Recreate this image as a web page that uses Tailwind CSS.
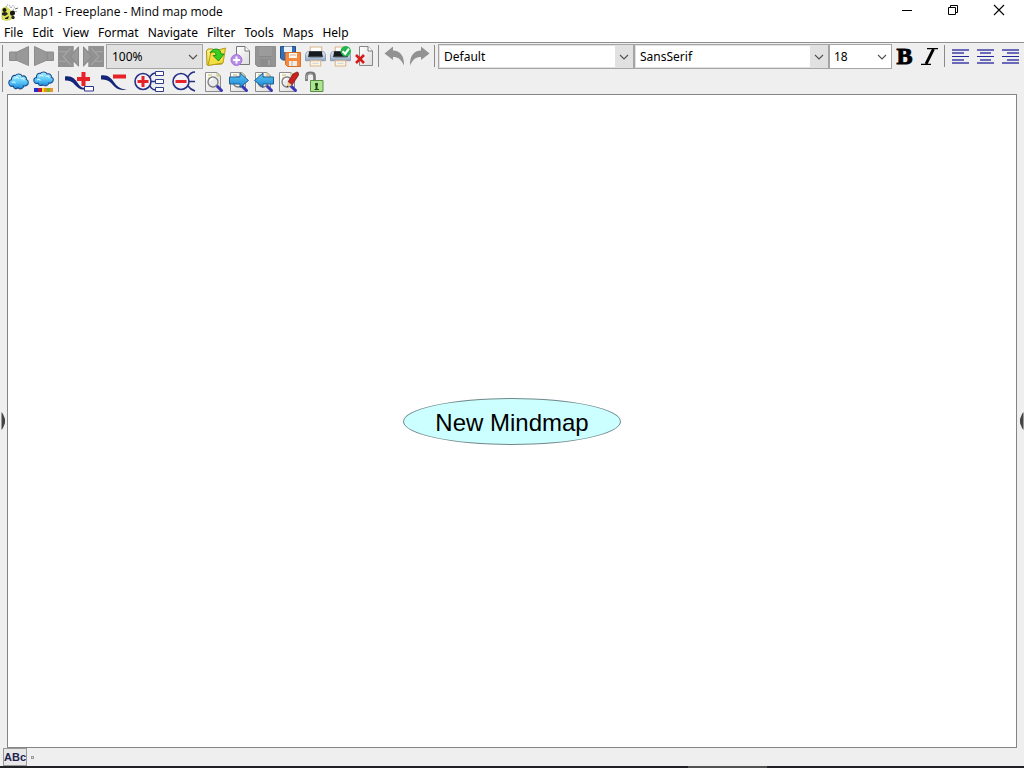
<!DOCTYPE html>
<html lang="en">
<head>
<meta charset="utf-8">
<title>Map1 - Freeplane - Mind map mode</title>
<script src="https://cdn.jsdelivr.net/npm/@tailwindcss/browser@4"></script>
</head>
<body class="flex h-screen flex-col overflow-hidden bg-[#efefef] text-xs text-black font-['Noto_Sans',sans-serif]">

<!-- Shared gradients and symbols -->
<svg class="absolute size-0" aria-hidden="true">
  <defs>
    <linearGradient id="sky" x1="0" y1="0" x2="0" y2="1"><stop offset="0" stop-color="#a8ecff"/><stop offset=".5" stop-color="#62cdf8"/><stop offset="1" stop-color="#1689dc"/></linearGradient>
    <linearGradient id="paper" x1="0" y1="0" x2="1" y2="1"><stop offset="0" stop-color="#ffffff"/><stop offset="1" stop-color="#dcdcdc"/></linearGradient>
    <linearGradient id="folder" x1="0" y1="0" x2="1" y2="1"><stop offset="0" stop-color="#fff48a"/><stop offset="1" stop-color="#e3c21c"/></linearGradient>
    <linearGradient id="blue" x1="0" y1="0" x2="0" y2="1"><stop offset="0" stop-color="#5ccaf8"/><stop offset="1" stop-color="#1a84d0"/></linearGradient>
    <linearGradient id="silver" x1="0" y1="0" x2="0" y2="1"><stop offset="0" stop-color="#eef4fb"/><stop offset="1" stop-color="#8da5c2"/></linearGradient>
    <symbol id="cloud" viewBox="0 0 20 15">
      <path d="M5 11.500C2.500 12.500 .5 10.500 .8 8.300C1 6.500 2.500 6 3.300 6C3 3.500 5 1.600 7 2.200C8.500 .3 12.500 .3 13.500 2.800C16 2 18 3.800 17.500 5.800C20 6.500 20 10 17.500 11C16.500 11.500 15.500 11.500 15 11.300C14.500 14 11 14.800 9.500 13C7.500 14.500 5.300 13.700 5 11.500Z" fill="url(#sky)" stroke="#17468c" stroke-width="1"/>
      <path d="M6 5C7.500 3 9.500 4 10 5M12 5C14 4 15 5 15.500 6.500M4 8.500C5 7.500 6.500 8 7 9" fill="none" stroke="#d8f7ff" stroke-width="1"/>
    </symbol>
    <symbol id="lens" viewBox="0 0 20 22">
      <path d="M1.500 1.500H13L16.500 5V20.500H1.500Z" fill="url(#paper)" stroke="#8c8c8c"/>
      <path d="M4 4H8M4 7H6M13 1.500V5H16.500" stroke="#c9bd69" fill="none"/>
      <path d="M13 15L17.500 19.500" stroke="#3836b5" stroke-width="3" stroke-linecap="round"/>
      <circle cx="9" cy="11" r="5" fill="#e7e9ec" fill-opacity=".85" stroke="#7c7c7c" stroke-width="1.300"/>
      <path d="M6 10A3.500 3.500 0 0 1 9.500 7.500" fill="none" stroke="#fff" stroke-width="1.500"/>
    </symbol>
    <symbol id="printer" viewBox="0 0 20 20">
      <path d="M5 6V1H16V6" fill="#fff" stroke="#d9b58a"/>
      <path d="M2 5.500H18L19.500 8V14H.5V8Z" fill="url(#silver)" stroke="#8394ab" stroke-width=".8"/>
      <path d="M4 5H16L17 10.500H3Z" fill="#171b1e"/>
      <path d="M4 10.500H16" stroke="#687179"/>
      <path d="M5 14H15V19H5Z" fill="#fff6e4" stroke="#d9b58a"/>
      <path d="M7 16.500H13" stroke="#c9d4df"/>
    </symbol>
    <symbol id="fastback" viewBox="0 0 20 20">
      <path d="M0 0H15V5L20 0V20L15 15V20H0Z" fill="#929292"/>
      <path d="M1 5.500H8M1 14.500H8M12 2L5 10L12 18" fill="none" stroke="#a9a9a9"/>
      <path d="M12 10L19.500 1V19Z" fill="#999" stroke="#858585" stroke-width=".7"/>
    </symbol>
    <symbol id="arrowback" viewBox="0 0 20 20">
      <path d="M19.500 .5L8 6H.5V14.500H8L19.500 19.500Z" fill="#999" stroke="#8c8c8c"/>
      <path d="M7 6V14" stroke="#888"/>
    </symbol>
    <symbol id="chevron" viewBox="0 0 10 6"><path d="M1 1L5 5L9 1" fill="none" stroke="#505050" stroke-width="1.100"/></symbol>
  </defs>
</svg>

<header class="shrink-0 border-b border-[#909090] bg-white">
  <div class="flex h-6 items-center">
    <svg class="ml-px size-[18px]" viewBox="0 0 18 18" aria-hidden="true">
      <path d="M1 6C4 3 9 5 10 9V16C7 18 3 17 1 16Z" fill="#dfe35c" stroke="#c9cf4c"/>
      <path d="M1 10C4 8 6 9 7 11L4 13L1 12ZM4 15L8 13L7 16H4Z" fill="#202620"/>
      <circle cx="3.500" cy="7" r="2" fill="#151915"/>
      <path d="M9 9C11 7 14 7 14 10C14 13 10 14 9 11Z" fill="#161a16"/>
      <circle cx="12" cy="14.500" r="1.700" fill="#222b19"/>
      <path d="M5 4C6 0 10 2 9 5M10 5C12 0 15 3 12 7" fill="none" stroke="#888" stroke-dasharray="1 1"/>
      <path d="M14 6L17 5M15 8V9" stroke="#666"/>
    </svg>
    <h1 class="ml-1 grow whitespace-nowrap font-['Open_Sans',sans-serif] text-xs">Map1 - Freeplane - Mind map mode</h1>
    <div class="flex h-6 items-start">
      <button aria-label="Minimize" class="grid h-5 w-[46px] place-items-center"><svg class="size-3" viewBox="0 0 12 12"><path d="M1 6.500H11" stroke="#000"/></svg></button>
      <button aria-label="Restore" class="grid h-5 w-[46px] place-items-center"><svg class="size-3" viewBox="0 0 12 12" fill="none" stroke="#000"><path d="M1.500 3.500H8.500V10.500H1.500ZM3.500 3.500V1.500H10.500V8.500H8.500"/></svg></button>
      <button aria-label="Close" class="grid h-5 w-[46px] place-items-center"><svg class="size-3" viewBox="0 0 12 12"><path d="M1 1L11 11M11 1L1 11" stroke="#000" stroke-width="1.100"/></svg></button>
    </div>
    <span class="w-0.5"></span>
  </div>
  <nav class="flex h-[18px] items-center gap-[9px] pl-1" aria-label="Menu">
    <button>File</button><button>Edit</button><button>View</button><button>Format</button><button>Navigate</button><button>Filter</button><button>Tools</button><button>Maps</button><button>Help</button>
  </nav>
</header>

<div class="shrink-0" role="toolbar" aria-label="Main toolbar">
  <div class="flex h-[26px] items-center">
    <span class="ml-0.5 mr-[3px] h-[22px] w-px bg-[#8a8a8a]"></span>
    <button aria-label="Back" class="grid h-6 w-[25px] shrink-0 place-items-center"><svg class="size-5"><use href="#arrowback"/></svg></button>
    <button aria-label="Forward" class="grid h-6 w-[25px] shrink-0 place-items-center"><svg class="size-5 -scale-x-100"><use href="#arrowback"/></svg></button>
    <button aria-label="Previous node" class="grid h-6 w-[25px] shrink-0 place-items-center"><svg class="size-[21px]"><use href="#fastback"/></svg></button>
    <button aria-label="Next node" class="grid h-6 w-[25px] shrink-0 place-items-center"><svg class="size-[21px] -scale-x-100"><use href="#fastback"/></svg></button>
    <div class="relative h-[25px] w-[97px] shrink-0">
      <select aria-label="Zoom" class="size-full appearance-none border border-[#a5a5a5] bg-[#e1e1e1] pl-[5px] pt-px"><option>100%</option></select>
      <svg class="pointer-events-none absolute right-[5px] top-[10px] h-1.5 w-2.5"><use href="#chevron"/></svg>
    </div>
    <button aria-label="Open" class="grid h-6 w-[25px] shrink-0 place-items-center"><svg class="size-5" viewBox="0 0 20 20"><path d="M1 19L.5 5L2 3H7L8 4H16V18Z" fill="url(#folder)" stroke="#a99316"/><path d="M5 6L19.500 2L17 17L2 19.500Z" fill="#f3df43" stroke="#b79b16"/><path d="M4 7C7 1 15 2 15 8H18L12.500 15L7 9.500H10C10 6 7 5 4 7Z" fill="#35ce24" stroke="#16820e" stroke-width=".8"/></svg></button>
    <button aria-label="New map" class="grid h-6 w-[25px] shrink-0 place-items-center"><svg class="size-[22px]" viewBox="0 0 22 22"><path d="M6.500 1.500H15L19.500 6V19.500H6.500Z" fill="url(#paper)" stroke="#777"/><path d="M15 1.500V6H19.500" fill="#fff" stroke="#777"/><circle cx="6.500" cy="15" r="5.500" fill="#b98be9" stroke="#a578d8"/><path d="M6.500 11.500V18.500M3 15H10" stroke="#fff" stroke-width="2"/></svg></button>
    <button aria-label="Save" class="grid h-6 w-[25px] shrink-0 place-items-center"><svg class="size-[21px]" viewBox="0 0 21 21"><path d="M.5 .5H20.500V20.500H2.500L.5 18.500Z" fill="#949494" stroke="#8e8e8e"/><path d="M4 1H17V10H4Z" fill="#9b9b9b"/><path d="M5 13H16V20H5Z" fill="#8c8c8c"/><path d="M13 14H15V19H13Z" fill="#a2a2a2"/><path d="M4 10.500H17" stroke="#898989"/></svg></button>
    <button aria-label="Save as" class="grid h-6 w-[25px] shrink-0 place-items-center"><svg class="size-[21px]" viewBox="0 0 21 21"><path d="M.5 .5H15.500V14H2.500L.5 12Z" fill="#3271b6" stroke="#224d87"/><path d="M4 .5H12V6H4Z" fill="#edf4f9"/><path d="M5.500 6.500H20.500V20.500H7.500L5.500 18.500Z" fill="#f58a3e" stroke="#d96e26"/><path d="M9 7H17V12H9Z" fill="#fff8ee"/><path d="M9 15H17V20H9Z" fill="#eee"/><path d="M10 9H16M12 15V20" stroke="#d9a988"/></svg></button>
    <button aria-label="Print" class="grid h-6 w-[25px] shrink-0 place-items-center"><svg class="size-[21px]"><use href="#printer"/></svg></button>
    <button aria-label="Quick print" class="grid h-6 w-[25px] shrink-0 place-items-center"><svg class="size-[21px]" viewBox="0 0 20 20"><use href="#printer" width="20" height="20"/><circle cx="15" cy="5" r="5" fill="#23b54b"/><path d="M12 5L14.500 7.500L18 2.500" fill="none" stroke="#fff" stroke-width="2"/></svg></button>
    <button aria-label="Close map" class="grid h-6 w-[25px] shrink-0 place-items-center"><svg class="size-[21px]" viewBox="0 0 21 21"><path d="M4.500 .5H13L17.500 5V19.500H4.500Z" fill="url(#paper)" stroke="#888"/><path d="M13 .5V5H17.500" fill="#fff" stroke="#777"/><path d="M1 9L9 17M9 9L1 17" stroke="#d51b1b" stroke-width="2.600"/></svg></button>
    <span class="mr-[3px] h-[22px] w-px bg-[#8a8a8a]"></span>
    <button aria-label="Undo" class="grid h-6 w-[25px] shrink-0 place-items-center"><svg class="size-[21px]" viewBox="0 0 21 21"><path d="M.5 7.500L9 .5V4.500C16 4.500 20.500 10 20 19.500C17 13 14 11 9 11V14Z" fill="#929292"/></svg></button>
    <button aria-label="Redo" class="grid h-6 w-[25px] shrink-0 place-items-center"><svg class="size-[21px]" viewBox="0 0 21 21"><path d="M20.500 7.500L12 .5V4.500C5 4.500 .5 10 1 19.500C4 13 7 11 12 11V14Z" fill="#929292"/></svg></button>
    <span class="ml-0.5 mr-[3px] h-[22px] w-px bg-[#8a8a8a]"></span>
    <div class="relative h-[25px] w-[196px] shrink-0 border border-[#a5a5a5] bg-[#e1e1e1] p-px">
      <select aria-label="Style" class="h-full w-[175px] appearance-none bg-white pl-1 pt-px"><option>Default</option></select>
      <svg class="pointer-events-none absolute right-1 top-[9px] h-1.5 w-2.5"><use href="#chevron"/></svg>
    </div>
    <div class="relative h-[25px] w-[195px] shrink-0 border border-[#a5a5a5] bg-[#e1e1e1] p-px">
      <select aria-label="Font" class="h-full w-[174px] appearance-none bg-white pl-1 pt-px"><option>SansSerif</option></select>
      <svg class="pointer-events-none absolute right-1 top-[9px] h-1.5 w-2.5"><use href="#chevron"/></svg>
    </div>
    <div class="relative h-[25px] w-[63px] shrink-0">
      <select aria-label="Font size" class="size-full appearance-none border border-[#a5a5a5] bg-white pl-1 pt-px"><option>18</option></select>
      <svg class="pointer-events-none absolute right-[5px] top-[10px] h-1.5 w-2.5"><use href="#chevron"/></svg>
    </div>
    <button aria-label="Bold" class="grid h-6 w-[25px] shrink-0 place-items-center font-['Liberation_Serif',serif] text-2xl leading-6 font-bold [-webkit-text-stroke:1px_#000]">B</button>
    <button aria-label="Italic" class="grid h-6 w-[25px] shrink-0 place-items-center"><svg class="h-[17px] w-[18px]" viewBox="0 0 18 17"><path d="M6 .7H17M0 16.300H10" stroke="#000" stroke-width="1.300"/><path d="M12.500 1L5 16" stroke="#000" stroke-width="2.800"/></svg></button>
    <span class="ml-0.5 mr-[3px] h-[22px] w-px bg-[#8a8a8a]"></span>
    <button aria-label="Align left" class="grid h-6 w-[25px] shrink-0 place-items-center"><svg class="h-[15px] w-[17px]" viewBox="0 0 17 15" stroke="#6a6ab8" stroke-width="2"><path d="M0 1H17M0 4H12M0 11H12M0 14H17"/><path d="M0 7.500H17" stroke="#26269c" stroke-width="1"/></svg></button>
    <button aria-label="Align center" class="grid h-6 w-[25px] shrink-0 place-items-center"><svg class="h-[15px] w-[17px]" viewBox="0 0 17 15" stroke="#6a6ab8" stroke-width="2"><path d="M0 1H17M3 4H14M3 11H14M0 14H17"/><path d="M0 7.500H17" stroke="#26269c" stroke-width="1"/></svg></button>
    <button aria-label="Align right" class="grid h-6 w-[25px] shrink-0 place-items-center"><svg class="h-[15px] w-[17px]" viewBox="0 0 17 15" stroke="#6a6ab8" stroke-width="2"><path d="M0 1H17M5 4H17M5 11H17M0 14H17"/><path d="M0 7.500H17" stroke="#26269c" stroke-width="1"/></svg></button>
  </div>

  <div class="flex h-[25px] items-center">
    <span class="ml-0.5 mr-[3px] h-[21px] w-px bg-[#8a8a8a]"></span>
    <button aria-label="Cloud" class="grid h-6 w-[25px] place-items-center"><svg class="h-[17px] w-[21px]" viewBox="0 0 20 15" preserveAspectRatio="none"><use href="#cloud" width="20" height="15"/></svg></button>
    <button aria-label="Cloud color" class="grid h-6 w-[25px] place-items-center"><svg class="h-[21px] w-[21px]" viewBox="0 0 21 21"><use href="#cloud" width="21" height="16"/><path d="M1 17H5V21H1Z" fill="#252bcb"/><path d="M5 17H9V21H5Z" fill="#b71942"/><path d="M9 17H11V21H9Z" fill="#f0df14"/><path d="M11 17H14V21H11Z" fill="#ef8e19"/><path d="M14 17H17V21H14Z" fill="#78ba20"/><path d="M17 17H20V21H17Z" fill="#ef942d"/></svg></button>
    <span class="ml-0.5 mr-[3px] h-[21px] w-px bg-[#8a8a8a]"></span>
    <button aria-label="New child node" class="grid h-6 w-[35px] place-items-center"><svg class="h-[21px] w-[29px]" viewBox="0 0 29 21"><path d="M0 5.500C7 4.500 10 8 13 12.500C15 15.500 17 17 20 17V18.500C15 19 13 17 10 14C7 10.500 5 9.500 0 9.500Z" fill="#142578"/><path d="M18.500 1V15M12 8H25" stroke="#e52329" stroke-width="4"/><path d="M19.500 15.500H28.500V20H19.500Z" fill="#fff" stroke="#303189"/></svg></button>
    <button aria-label="Delete node" class="grid h-6 w-[33px] place-items-center"><svg class="h-[21px] w-[26px]" viewBox="0 0 26 21"><path d="M0 4.500C7 3.500 10 7 14 12.500C17 16.500 20 18 26 18.500C19 20 15 18 11 13C8 9.500 5 8.500 0 8.500Z" fill="#142578"/><path d="M12 5.500H25" stroke="#e52329" stroke-width="4"/></svg></button>
    <button aria-label="Unfold one level" class="grid h-6 w-[37px] place-items-center"><svg class="h-[21px] w-[30px]" viewBox="0 0 30 21" fill="none"><path d="M16 6C18 2 20 2 22 2M17 10.500H22M16 15C18 19 20 19 22 19" stroke="#253083" stroke-width="1.500"/><circle cx="9" cy="10.500" r="8" fill="#f3f1f6" stroke="#253083" stroke-width="1.600"/><path d="M9 5V16M3.500 10.500H14.500" stroke="#e5232b" stroke-width="3"/><path d="M21.500 .5H29.500V4.500H21.500ZM21.500 8.500H29.500V12.500H21.500ZM21.500 16.500H29.500V20.500H21.500Z" fill="#fff" stroke="#303d91"/></svg></button>
    <button aria-label="Fold one level" class="grid h-6 w-[34px] place-items-center"><svg class="h-[21px] w-6" viewBox="0 0 24 21" fill="none"><path d="M16 6C18 2 20 1 23 1M17 10.500H23M16 15C18 18 20 19 23 20" stroke="#253083" stroke-width="1.500"/><circle cx="9" cy="10.500" r="8" fill="#f3f1f6" stroke="#253083" stroke-width="1.600"/><path d="M3.500 10.500H14.500" stroke="#e5232b" stroke-width="3"/></svg></button>
    <button aria-label="Find" class="grid h-6 w-[25px] place-items-center"><svg class="h-[22px] w-5"><use href="#lens"/></svg></button>
    <button aria-label="Find next" class="grid h-6 w-[25px] place-items-center"><svg class="h-[22px] w-5" viewBox="0 0 20 22"><use href="#lens" width="20" height="22"/><path d="M.5 6H11V2L19.500 9.500L11 16.500V13H.5Z" fill="url(#blue)" stroke="#235e91"/></svg></button>
    <button aria-label="Find previous" class="grid h-6 w-[25px] place-items-center"><svg class="h-[22px] w-5" viewBox="0 0 20 22"><use href="#lens" width="20" height="22"/><path d="M19.500 6H9V2L.5 9.500L9 16.500V13H19.500Z" fill="url(#blue)" stroke="#235e91"/></svg></button>
    <button aria-label="Find and replace" class="grid h-6 w-[25px] place-items-center"><svg class="h-[22px] w-[21px]" viewBox="0 0 21 22"><use href="#lens" width="20" height="22"/><path d="M10 11L15 3L19 1C21 1 21 4 20 5L14 14Z" fill="#c9211c" stroke="#79201b" stroke-width=".8"/><path d="M10 11L14 14L8.500 16.500Z" fill="#eecb91"/><path d="M8.500 16.500L9.300 14.500L10.500 15.700Z" fill="#302926"/></svg></button>
    <button aria-label="Encrypt" class="grid h-6 w-[26px] place-items-center"><svg class="h-[22px] w-5" viewBox="0 0 20 22"><path d="M2.500 10V5C2.500 .8 10.500 .8 10.500 5V10" fill="none" stroke="#727272" stroke-width="2.600"/><path d="M2.500 8V5C2.500 2 9 2 9 4" fill="none" stroke="#aaa"/><path d="M6.500 9.500H19V20.500H6.500Z" fill="#ace590" stroke="#5c8d48"/><path d="M11 14C10 11 15 11 14 14L13.500 15V18H15V19H10.500V18H11.500V15Z" fill="#224719"/></svg></button>
  </div>
</div>

<main class="flex min-h-0 grow">
  <button aria-label="Expand left panel" class="grid w-[7px] shrink-0 place-items-center"><svg class="h-5 w-[5px]" viewBox="0 0 5 20"><path d="M.5 1L2 3L4 8V12L2 17L.5 19Z" fill="#454545"/></svg></button>
  <section aria-label="Mind map" class="grid grow place-items-center border border-[#858585] bg-white">
    <div class="grid h-[47px] w-[218px] place-items-center rounded-[50%] border border-[#71888a] bg-[#ccffff] pt-1 font-['Liberation_Sans',sans-serif] text-2xl">New Mindmap</div>
  </section>
  <button aria-label="Expand right panel" class="grid w-[7px] shrink-0 place-items-center justify-end"><svg class="h-5 w-[5px]" viewBox="0 0 5 20"><path d="M4.500 1L3 3L1 8V12L3 17L4.500 19Z" fill="#454545"/></svg></button>
</main>

<footer class="shrink-0">
  <div class="flex h-[18px] items-center">
    <button class="ml-[3px] h-[18px] w-6 border border-[#999] bg-[#e7e7e9] font-['Liberation_Sans',sans-serif] text-[11px] leading-4 font-bold text-[#22224e]">ABc</button>
    <span class="ml-1 size-[3px] border border-[#999]"></span>
  </div>
  <div class="grid h-0.5 grid-cols-[688fr_79fr_257fr] bg-[#202124]"><span></span><span class="bg-[#515253]"></span><span></span></div>
</footer>
</body>
</html>
